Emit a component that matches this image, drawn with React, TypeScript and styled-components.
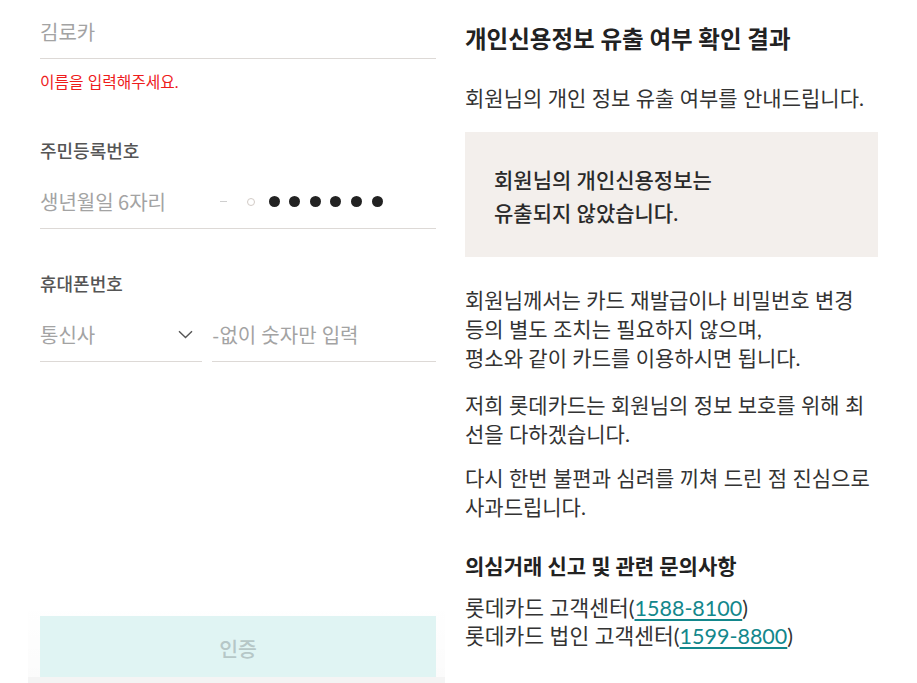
import React from 'react';
import styled, { createGlobalStyle } from 'styled-components';

const GlobalStyle = createGlobalStyle`
  html, body {
    margin: 0;
    padding: 0;
    background: #fff;
  }
  body {
    font-family: Lato, "Noto Sans CJK KR", "Noto Sans", sans-serif;
    color: #333;
  }
`;

const Page = styled.div`
  display: flex;
  height: 683px;
  overflow: hidden;
`;

const FormPanel = styled.div`
  width: 417px;
  margin-left: 28px;
  display: flex;
  flex-direction: column;
`;

const FormBody = styled.div`
  flex: 1;
  padding: 0 9px 0 12px;
  display: flex;
  flex-direction: column;
`;

const Field = styled.div<{ $basis?: string }>`
  display: flex;
  align-items: center;
  height: 53px;
  border-bottom: 1px solid #ddd9d6;
  font-size: 20px;
  color: #a3a3a3;
  flex: ${p => p.$basis ?? '1 1 auto'};
  min-width: 0;
  white-space: nowrap;
`;

const NameField = styled(Field)`
  flex: none;
  margin-top: 5px;
`;

const ErrorText = styled.p`
  margin: 13px 0 0;
  font-size: 15.8px;
  line-height: 20px;
  color: #ee1c1c;
`;

const Label = styled.div<{ $top: number }>`
  margin-top: ${p => p.$top}px;
  font-size: 18px;
  line-height: 22px;
  font-weight: 500;
  color: #555;
`;

const FieldRow = styled.div`
  display: flex;
  gap: 10px;
  margin-top: 13px;
`;

const BirthText = styled.span`
  width: 180px;
  font-family: "Noto Sans CJK KR", "Noto Sans", sans-serif;
`;

const Dash = styled.span`
  width: 7px;
  height: 1.5px;
  background: #cfcfcf;
  margin-right: 20px;
`;

const Masked = styled.div`
  display: flex;
  align-items: center;
  gap: 9.6px;
`;

const Dot = styled.span<{ $hollow?: boolean }>`
  box-sizing: border-box;
  width: ${p => (p.$hollow ? 8 : 11)}px;
  height: ${p => (p.$hollow ? 8 : 11)}px;
  border-radius: 50%;
  background: ${p => (p.$hollow ? 'transparent' : '#222')};
  border: ${p => (p.$hollow ? '1.5px solid #d2cbc6' : 'none')};
  margin-right: ${p => (p.$hollow ? 4 : 0)}px;
`;

const SelectText = styled.span`
  flex: 1;
`;

const Chevron = styled.svg`
  margin-right: 9px;
`;

const Spacer = styled.div`
  flex: 1;
`;

const Footer = styled.div`
  padding: 14px 9px 0 12px;
  background: linear-gradient(rgba(0, 0, 0, 0), rgba(0, 0, 0, 0.015));
`;

const SubmitButton = styled.button`
  display: block;
  width: 100%;
  height: 61px;
  border: none;
  background: #e0f4f3;
  color: #b6c7c7;
  font-family: inherit;
  font-size: 20.5px;
  font-weight: 500;
  padding: 2px 0 0;
`;

const BottomBar = styled.div`
  height: 6px;
  background: #f4f4f4;
`;

const ResultPanel = styled.div`
  width: 413px;
  margin-left: 20px;
  font-size: 21px;
  color: #333;
`;

const Title = styled.h2`
  margin: 24px 0 0;
  font-size: 23.5px;
  line-height: 30px;
  font-weight: 700;
  color: #222;
`;

const Lead = styled.p`
  margin: 29px 0 0;
  line-height: 30px;
`;

const ResultBox = styled.div`
  margin-top: 19px;
  background: #f3efec;
  padding: 31px 28px 28px 29px;
  font-weight: 500;
  line-height: 33px;
  color: #2a2a2a;
`;

const Paragraph = styled.p<{ $top: number }>`
  margin: ${p => p.$top}px 0 0;
  line-height: 29px;
  white-space: nowrap;
`;

const SubTitle = styled.h3`
  margin: 31px 0 0;
  font-size: 21px;
  line-height: 28px;
  font-weight: 700;
  color: #222;
`;

const Contacts = styled.div`
  margin-top: 14px;
  line-height: 28px;
  font-size: 21.5px;
`;

const Phone = styled.a`
  color: #13878c;
  text-decoration: underline;
  text-underline-offset: 3px;
`;

const App = () => {
  return (
    <>
      <GlobalStyle />
      <Page>
        <FormPanel>
          <FormBody>
            <NameField>김로카</NameField>
            <ErrorText>이름을 입력해주세요.</ErrorText>

            <Label $top={48}>주민등록번호</Label>
            <FieldRow>
              <Field>
                <BirthText>생년월일 6자리</BirthText>
                <Dash />
                <Masked>
                  <Dot $hollow />
                  {[0, 1, 2, 3, 4, 5].map(i => (
                    <Dot key={i} />
                  ))}
                </Masked>
              </Field>
            </FieldRow>

            <Label $top={44}>휴대폰번호</Label>
            <FieldRow>
              <Field $basis="0 0 162px">
                <SelectText>통신사</SelectText>
                <Chevron width="15" height="9" viewBox="0 0 15 9">
                  <path d="M1 1.2 L7.5 7.5 L14 1.2" fill="none" stroke="#555" strokeWidth="1.4" />
                </Chevron>
              </Field>
              <Field>-없이 숫자만 입력</Field>
            </FieldRow>
            <Spacer />
          </FormBody>
          <Footer>
            <SubmitButton type="button">인증</SubmitButton>
          </Footer>
          <BottomBar />
        </FormPanel>

        <ResultPanel>
          <Title>개인신용정보 유출 여부 확인 결과</Title>
          <Lead>회원님의 개인 정보 유출 여부를 안내드립니다.</Lead>
          <ResultBox>
            회원님의 개인신용정보는
            <br />
            유출되지 않았습니다.
          </ResultBox>
          <Paragraph $top={28}>
            회원님께서는 카드 재발급이나 비밀번호 변경
            <br />
            등의 별도 조치는 필요하지 않으며,
            <br />
            평소와 같이 카드를 이용하시면 됩니다.
          </Paragraph>
          <Paragraph $top={18}>
            저희 롯데카드는 회원님의 정보 보호를 위해 최
            <br />
            선을 다하겠습니다.
          </Paragraph>
          <Paragraph $top={15}>
            다시 한번 불편과 심려를 끼쳐 드린 점 진심으로
            <br />
            사과드립니다.
          </Paragraph>
          <SubTitle>의심거래 신고 및 관련 문의사항</SubTitle>
          <Contacts>
            롯데카드 고객센터(<Phone href="#">1588-8100</Phone>)
            <br />
            롯데카드 법인 고객센터(<Phone href="#">1599-8800</Phone>)
          </Contacts>
        </ResultPanel>
      </Page>
    </>
  );
};

export default App;
